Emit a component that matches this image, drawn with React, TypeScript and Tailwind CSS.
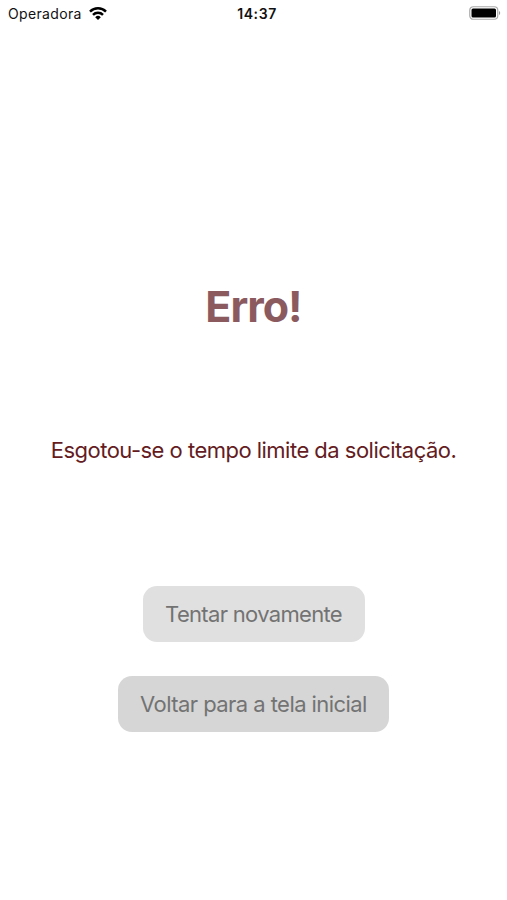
export default function App() {
  return (
    <div className="flex h-[900px] w-[507px] flex-col bg-white font-['Inter',sans-serif]">
      <header className="grid h-7 grid-cols-3 items-center pl-2 pr-1.5 text-[#111]">
        <div className="flex items-center gap-[7px]">
          <span className="text-[14px] leading-none tracking-[0.35px]">Operadora</span>
          <svg className="-mt-0.5" width="18" height="13" viewBox="0 0 18 13" fill="none" stroke="#000" strokeWidth="2.5">
            <path d="M1 4.6a11.4 11.4 0 0 1 16 0" />
            <path d="M4 7.8a7.1 7.1 0 0 1 10 0" />
            <path d="M9 13 6.2 10.200a4 4 0 0 1 5.600 0Z" fill="#000" stroke="none" />
          </svg>
        </div>
        <span className="pl-[5px] text-center text-[14px] font-semibold leading-none tracking-[0.6px]">14:37</span>
        <svg className="-mt-0.5 justify-self-end" width="32" height="14" viewBox="0 0 32 14">
          <rect x="0.75" y="0.75" width="28" height="12.5" rx="3.5" fill="none" stroke="#aaa" strokeWidth="1.2" />
          <rect x="2.5" y="2.5" width="24.5" height="9" rx="1.5" fill="#000" />
          <path d="M30 5v4c1.6-.6 1.6-3.4 0-4Z" fill="#999" />
        </svg>
      </header>

      <main className="flex flex-col items-center">
        <h1 className="mt-[251px] text-[43px] font-bold leading-[54px] tracking-[-1px] text-[#8b5a5e]">Erro!</h1>
        <p className="mt-[102px] text-[22px] leading-[30px] tracking-[-0.52px] text-[#641c22]">
          Esgotou-se o tempo limite da solicitação.
        </p>
        <button className="mt-[121px] h-14 w-[222px] rounded-[14px] bg-[#e0e0e0] text-[22px] tracking-[-0.68px] text-[#737373]">
          Tentar novamente
        </button>
        <button className="mt-[34px] h-14 w-[271px] rounded-[14px] bg-[#d6d6d6] text-[22px] tracking-[-0.56px] text-[#737373]">
          Voltar para a tela inicial
        </button>
      </main>
    </div>
  );
}
